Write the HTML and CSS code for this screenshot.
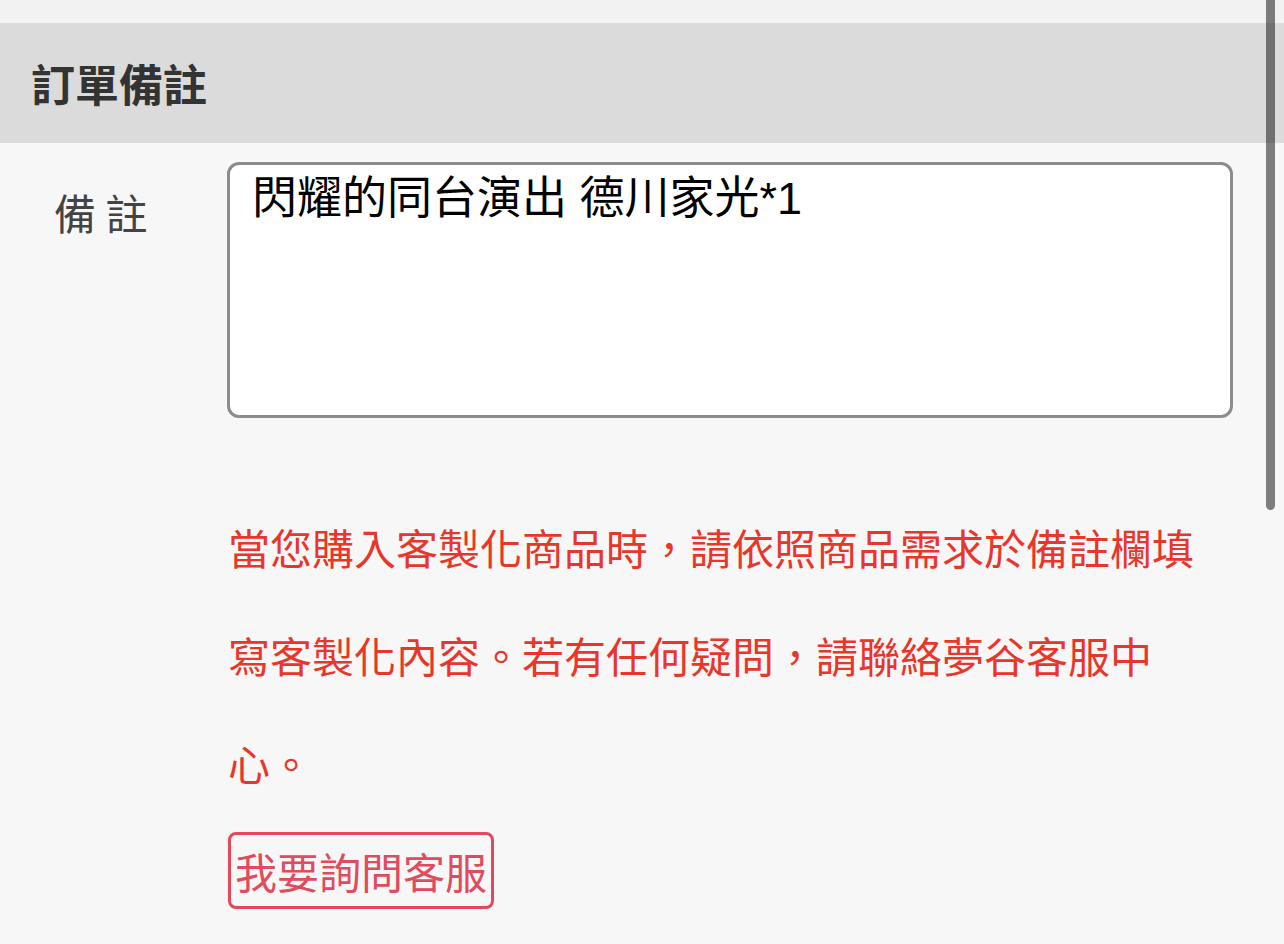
FILE: index.html
```html
<!DOCTYPE html>
<html lang="zh-Hant">
<head>
<meta charset="utf-8">
<title>訂單備註</title>
<link rel="stylesheet" href="styles.css">
</head>
<body>
<div class="top-strip"></div>
<div class="section-head">
    <h2>訂單備註</h2>
</div>
<div class="note-row">
    <label class="note-label" for="note">備 註</label>
    <textarea id="note" class="note-input">閃耀的同台演出 德川家光*1</textarea>
</div>
<div class="note-help">
    <p class="warning">當您購入客製化商品時，請依照商品需求於備註欄填寫客製化內容。若有任何疑問，請聯絡夢谷客服中心。</p>
    <button class="ask-button">我要詢問客服</button>
</div>
<div class="scroll-thumb"></div>
</body>
</html>
```

FILE: styles.css
```css
html, body {
  margin: 0;
  padding: 0;
}
body {
  font-family: "Noto Sans CJK TC", "Noto Sans", sans-serif;
  background: #f7f7f7;
  color: #333;
  min-height: 944px;
  overflow: hidden;
}
.top-strip {
  height: 23px;
  background: #f2f2f2;
}
.section-head {
  height: 120px;
  background: #dbdbdb;
  display: flex;
  align-items: center;
  padding-left: 31px;
}
.section-head h2 {
  margin: 0;
  font-size: 44px;
  font-weight: 700;
  color: #333;
  line-height: 1;
}
.note-row {
  display: grid;
  grid-template-columns: 227px 1006px;
  margin-top: 19px;
}
.note-label {
  font-size: 42px;
  color: #444;
  padding-left: 54px;
  padding-top: 25px;
  line-height: 1.2;
}
.note-input {
  box-sizing: border-box;
  height: 256px;
  border: 3px solid #8c8c90;
  border-radius: 12px;
  background: #fff;
  padding: 7px 22px;
  font-family: "Liberation Sans", "Noto Sans CJK TC", sans-serif;
  font-size: 45px;
  line-height: 1.2;
  color: #000;
  resize: none;
  outline: none;
  margin: 0;
}
.note-help {
  padding-left: 228px;
  width: 1005px;
}
.warning {
  margin: 75px 0 0;
  font-size: 42px;
  line-height: 108px;
  color: #e8362b;
}
.ask-button {
  margin-top: 15px;
  border: 3px solid #e5485a;
  border-radius: 8px;
  background: transparent;
  color: #e04b5d;
  font-family: "Noto Sans CJK TC", sans-serif;
  font-size: 42px;
  line-height: 59px;
  padding: 6px 4px;
  cursor: pointer;
}
.scroll-thumb {
  position: absolute;
  top: 0;
  left: 1266px;
  width: 9px;
  height: 510px;
  background: rgba(0, 0, 0, 0.49);
  border-radius: 0 0 5px 5px;
}
```
